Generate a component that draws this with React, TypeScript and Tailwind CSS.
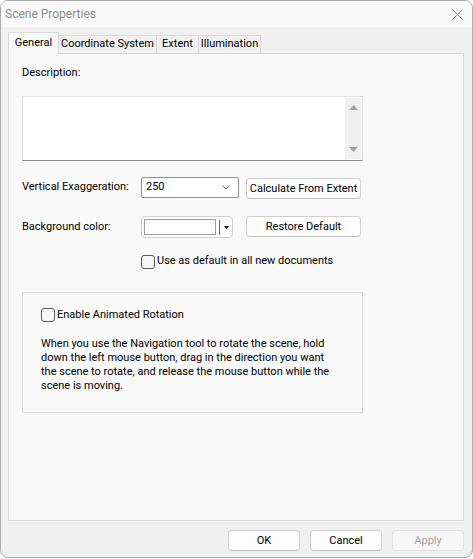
const font = { fontFamily: '"Segoe UI", Roboto, "Liberation Sans", sans-serif' };

function Checkbox() {
  return <span className="block size-[14px] shrink-0 rounded-[3px] border border-[#5c5c5c] bg-[#f7f7f7]" />;
}

function Button({ label, disabled = false, className = "" }: { label: string; disabled?: boolean; className?: string }) {
  return (
    <button
      type="button"
      className={
        "flex h-[21px] items-center justify-center rounded-[4px] border text-[11px] leading-none " +
        (disabled
          ? "border-[#e2e2e2] bg-[#f6f6f6] text-[#a0a0a0] "
          : "border-[#d0d0d0] border-b-[#bdbdbd] bg-[#fdfdfd] text-black ") +
        className
      }
    >
      {label}
    </button>
  );
}

export default function App() {
  return (
    <div className="h-[559px] w-[473px] bg-white text-[11px] text-black" style={font}>
      <div className="flex h-[558px] w-[473px] flex-col overflow-hidden rounded-lg border border-[#ababab] bg-[#f0f0f0]">
        {/* title bar */}
        <div className="flex h-[26px] shrink-0 items-center justify-between bg-[#f9f9f9] pl-[4px] pr-[9px]">
          <span className="text-[12px] text-[#8d8d8d]">Scene Properties</span>
          <svg width="11" height="11" viewBox="0 0 11 11" className="mt-[1px]">
            <path d="M0.5 0.5 L10.5 10.5 M10.5 0.5 L0.5 10.5" stroke="#8a8a8a" strokeWidth="1" fill="none" />
          </svg>
        </div>

        <div className="px-[7px]">
          {/* tabs */}
          <div className="mt-[5px] flex h-[21px] items-end">
            <div className="relative z-10 -mb-px flex h-[22px] w-[51px] items-center justify-center border-x border-t border-[#d9d9d9] bg-[#f9f9f9] pb-[1px]">
              General
            </div>
            <div className="flex h-[18px] w-[98px] items-center justify-center border-r border-t border-[#d9d9d9] bg-[#f0f0f0]">
              Coordinate System
            </div>
            <div className="flex h-[18px] w-[42px] items-center justify-center border-r border-t border-[#d9d9d9] bg-[#f0f0f0]">
              Extent
            </div>
            <div className="flex h-[18px] w-[62px] items-center justify-center border-r border-t border-[#d9d9d9] bg-[#f0f0f0]">
              Illumination
            </div>
          </div>

          {/* panel */}
          <div className="h-[468px] w-[456px] border border-[#d9d9d9] bg-[#f9f9f9] pl-[13px]">
            <div className="mt-[11px] h-[16px] leading-[16px]">Description:</div>

            <div className="mt-[15px] flex h-[65px] w-[341px] border border-[#e3e3e3] border-b-[#8a8a8a] bg-white">
              <div className="flex-1" />
              <div className="my-[1px] mr-[1px] flex w-[16px] flex-col items-center justify-between bg-[#f0f0f0] py-[7px]">
                <svg width="9" height="5" viewBox="0 0 9 5"><path d="M0 5 L4.5 0 L9 5 Z" fill="#a3a3a3" /></svg>
                <svg width="9" height="5" viewBox="0 0 9 5"><path d="M0 0 L4.5 5 L9 0 Z" fill="#a3a3a3" /></svg>
              </div>
            </div>

            {/* vertical exaggeration */}
            <div className="mt-[16px] flex h-[22px] items-start">
              <div className="flex h-[21px] w-[119px] items-center">Vertical Exaggeration:</div>
              <div className="flex h-[21px] w-[98px] items-center justify-between rounded-[2px] border border-[#8f8f8f] bg-white pl-[4px] pr-[8px]">
                <span>250</span>
                <svg width="8" height="5" viewBox="0 0 8 5"><path d="M0.5 0.5 L4 4 L7.5 0.5" stroke="#707070" strokeWidth="1" fill="none" /></svg>
              </div>
              <Button label="Calculate From Extent" className="ml-[7px] mt-[1px] w-[115px]" />
            </div>

            {/* background color */}
            <div className="mt-[17px] flex h-[22px] items-center">
              <div className="w-[119px]">Background color:</div>
              <div className="flex h-[22px] w-[92px] items-center rounded-[4px] border border-[#d2d2d2] bg-[#fbfbfb] pl-[2px]">
                <div className="h-[16px] w-[72px] border border-[#9c9c9c] bg-white" />
                <div className="ml-[3px] h-[15px] w-px bg-[#6a6a6a]" />
                <svg width="5" height="3" viewBox="0 0 5 3" className="ml-[4px]"><path d="M0 0 L5 0 L2.5 3 Z" fill="#111" /></svg>
              </div>
              <Button label="Restore Default" className="ml-[13px] w-[115px] self-start" />
            </div>

            {/* default checkbox */}
            <div className="ml-[119px] mt-[16px] flex h-[15px] items-center gap-[2px]">
              <Checkbox />
              <span>Use as default in all new documents</span>
            </div>

            {/* group box */}
            <div className="mt-[23px] h-[121px] w-[341px] border border-[#dcdcdc] pl-[18px] pt-[15px]">
              <div className="flex h-[14px] items-center gap-[2px]">
                <Checkbox />
                <span>Enable Animated Rotation</span>
              </div>
              <p className="mt-[15px] leading-[14px]">
                When you use the Navigation tool to rotate the scene, hold
                <br />
                down the left mouse button, drag in the direction you want
                <br />
                the scene to rotate, and release the mouse button while the
                <br />
                scene is moving.
              </p>
            </div>
          </div>
        </div>

        {/* footer */}
        <div className="mt-[9px] flex justify-end gap-[10px] pr-[8px]">
          <Button label="OK" className="w-[72px]" />
          <Button label="Cancel" className="w-[72px]" />
          <Button label="Apply" disabled className="w-[72px]" />
        </div>
      </div>
    </div>
  );
}
